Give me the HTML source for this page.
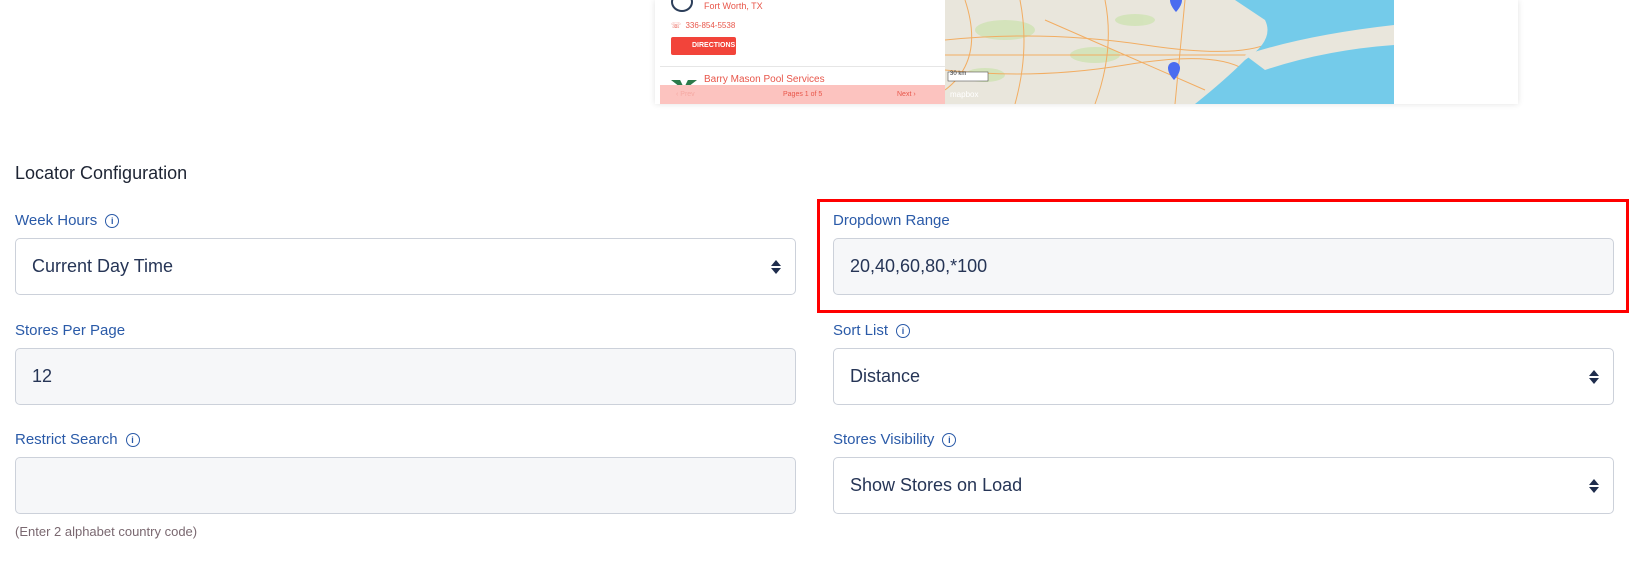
<!DOCTYPE html>
<html><head><meta charset="utf-8"><style>
*{box-sizing:border-box;margin:0;padding:0}
body{width:1635px;height:562px;background:#fff;font-family:"Liberation Sans",sans-serif;position:relative;overflow:hidden}
.abs{position:absolute}
.lbl{position:absolute;font-size:15px;color:#2a5aa8;line-height:18px;white-space:nowrap}
.info{display:inline-block;width:14px;height:14px;border:1.3px solid #2a5aa8;border-radius:50%;font-size:9px;text-align:center;line-height:12px;vertical-align:1px;margin-left:8px;font-weight:bold}
.inp{position:absolute;border:1px solid #ccd1da;border-radius:5px;background:#f6f7f9;font-size:18px;color:#263556;padding-left:16px;display:flex;align-items:center}
.sel{background:#fff}
.arr{position:absolute;right:14px;top:50%;margin-top:-7px;width:10px;height:14px}
</style></head><body>
<div class="abs" style="left:655px;top:0;width:863px;height:104px;box-shadow:0 0 6px rgba(0,0,0,.12);background:#fff"></div>
<div class="abs" style="left:660px;top:0;width:285px;height:104px;background:#fff">
  <div class="abs" style="left:11px;top:-8px;width:22px;height:20px;border:2px solid #2c3e5a;border-radius:50%"></div>
  <div class="abs" style="left:44px;top:1px;font-size:9px;color:#e8564a">Fort Worth, TX</div>
  <div class="abs" style="left:11px;top:21px;font-size:8px;color:#e8564a">☏ &nbsp;336-854-5538</div>
  <div class="abs" style="left:11px;top:37px;width:65px;height:18px;background:#f2443a;border-radius:2px;color:#fff;font-size:7px;font-weight:bold;line-height:18px;padding-left:21px">DIRECTIONS</div>
  <div class="abs" style="left:0;top:66px;width:285px;height:1px;background:#e6e6e6"></div>
  <div class="abs" style="left:11px;top:80px;width:26px;height:8px;background:#2c7a4a;clip-path:polygon(0 0,35% 0,50% 100%,65% 0,100% 0,60% 100%,40% 100%)"></div>
  <div class="abs" style="left:44px;top:74px;font-size:10px;color:#e8564a">Barry Mason Pool Services</div>
  <div class="abs" style="left:0;top:85px;width:285px;height:19px;background:#fcc3bf;font-size:7px;color:#e8564a">
    <span class="abs" style="left:16px;top:6px;color:#f5a8a2">‹ Prev</span>
    <span class="abs" style="left:123px;top:6px">Pages 1 of 5</span>
    <span class="abs" style="left:237px;top:6px">Next ›</span>
  </div>
</div>
<div class="abs" style="left:945px;top:0;width:449px;height:104px;background:#e9e6dc;overflow:hidden">
  <svg class="abs" style="left:0;top:0" width="449" height="104" viewBox="0 0 449 104">
    <g fill="#cfe3b4" opacity=".8"><ellipse cx="60" cy="30" rx="30" ry="10"/><ellipse cx="150" cy="55" rx="25" ry="8"/><ellipse cx="40" cy="75" rx="20" ry="7"/><ellipse cx="190" cy="20" rx="20" ry="6"/></g>
    <g fill="none" stroke="#f2ad62" stroke-width="1"><path d="M0 40 Q100 30 200 45 T330 40"/><path d="M0 70 Q90 80 180 65 T300 70"/><path d="M75 0 Q85 50 70 104"/><path d="M160 0 Q170 50 150 104"/><path d="M20 0 Q40 60 0 90"/><path d="M240 0 L230 104"/><path d="M100 20 L260 90"/><path d="M0 55 L320 55"/></g>
    <path d="M290 0 L449 0 L449 104 L250 104 Q280 80 300 60 Q330 40 320 20 Z" fill="#74cbea"/>
    <path d="M300 55 Q360 35 449 25 L449 45 Q380 50 320 70 Z" fill="#e9e6dc"/>
    <path d="M225 0 a6 6 0 0 1 12 0 c0 6 -6 12 -6 12 c0 0 -6 -6 -6 -12z" fill="#4a6cf0"/>
    <path d="M223 68 a6 6 0 0 1 12 0 c0 6 -6 12 -6 12 c0 0 -6 -6 -6 -12z" fill="#4a6cf0"/>
    <rect x="3" y="72" width="40" height="9" fill="#fff" stroke="#333" stroke-width=".5"/>
  </svg>
  <div class="abs" style="left:5px;top:71px;font-size:6px;color:#333">30 km</div>
  <div class="abs" style="left:5px;top:90px;font-size:8px;color:#fff">mapbox</div>
</div>

<div class="abs" style="left:15px;top:163px;font-size:18px;color:#1d2433">Locator Configuration</div>

<div class="lbl" style="left:15px;top:212px">Week Hours<span class="info">i</span></div>
<div class="inp sel" style="left:15px;top:238px;width:781px;height:57px">Current Day Time<svg class="arr" viewBox="0 0 10 14"><path d="M5 0L10 6H0Z M5 14L10 8H0Z" fill="#1f2d4d"/></svg></div>

<div class="abs" style="left:817px;top:199px;width:812px;height:114px;border:3px solid #ff0000"></div>
<div class="lbl" style="left:833px;top:212px">Dropdown Range</div>
<div class="inp" style="left:833px;top:238px;width:781px;height:57px">20,40,60,80,*100</div>

<div class="lbl" style="left:15px;top:322px">Stores Per Page</div>
<div class="inp" style="left:15px;top:348px;width:781px;height:57px">12</div>

<div class="lbl" style="left:833px;top:322px">Sort List<span class="info">i</span></div>
<div class="inp sel" style="left:833px;top:348px;width:781px;height:57px">Distance<svg class="arr" viewBox="0 0 10 14"><path d="M5 0L10 6H0Z M5 14L10 8H0Z" fill="#1f2d4d"/></svg></div>

<div class="lbl" style="left:15px;top:431px">Restrict Search<span class="info">i</span></div>
<div class="inp" style="left:15px;top:457px;width:781px;height:57px"></div>
<div class="abs" style="left:15px;top:524px;font-size:13px;color:#7a6870">(Enter 2 alphabet country code)</div>

<div class="lbl" style="left:833px;top:431px">Stores Visibility<span class="info">i</span></div>
<div class="inp sel" style="left:833px;top:457px;width:781px;height:57px">Show Stores on Load<svg class="arr" viewBox="0 0 10 14"><path d="M5 0L10 6H0Z M5 14L10 8H0Z" fill="#1f2d4d"/></svg></div>
</body></html>
